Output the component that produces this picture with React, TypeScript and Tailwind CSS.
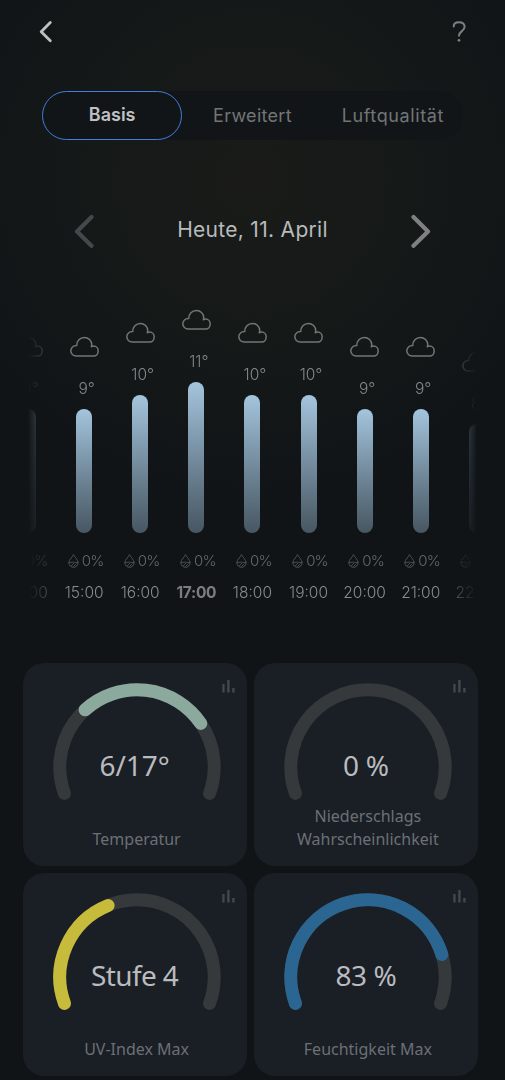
import React from 'react';

interface Hour {
  time: string;
  temp: number;
  barClass: string;
  active?: boolean;
}

interface GaugeCardProps {
  value: string;
  label: React.ReactNode;
  color?: string;
  from?: number;
  to?: number;
  valueClass?: string;
  labelClass?: string;
}

const hours: Hour[] = [
  { time: '14:00', temp: 9, barClass: 'h-[124px]' },
  { time: '15:00', temp: 9, barClass: 'h-[124px]' },
  { time: '16:00', temp: 10, barClass: 'h-[138px]' },
  { time: '17:00', temp: 11, barClass: 'h-[151px]', active: true },
  { time: '18:00', temp: 10, barClass: 'h-[138px]' },
  { time: '19:00', temp: 10, barClass: 'h-[138px]' },
  { time: '20:00', temp: 9, barClass: 'h-[124px]' },
  { time: '21:00', temp: 9, barClass: 'h-[124px]' },
  { time: '22:00', temp: 8, barClass: 'h-[109px]' },
];

const RADIUS = 77.2;
const CENTER = 84;

// 0 is the lower left end of the 220° sweep, 1 the lower right end
const pointAt = (t: number) => {
  const angle = ((200 - 220 * t) * Math.PI) / 180;
  return `${CENTER + RADIUS * Math.cos(angle)} ${CENTER - RADIUS * Math.sin(angle)}`;
};

const arcPath = (from: number, to: number) => {
  const large = (to - from) * 220 > 180 ? 1 : 0;
  return `M${pointAt(from)}A${RADIUS} ${RADIUS} 0 ${large} 1 ${pointAt(to)}`;
};

const CloudIcon: React.FC = () => (
  <svg className="h-[21px] w-[29px]" viewBox="0 0 29 21" fill="none" stroke="#737677" strokeWidth="1.5" strokeLinejoin="round">
    <path d="M6.200 20.100a5.300 5.300 0 0 1-5.400-5.300c0-3 2.600-5.400 5.900-5.200C6.700 4.800 10 1.400 14.300 1.400c4.200 0 7.400 3.200 7.400 7.200 0 .8-.1 1.500-.4 2.200.8-.5 1.600-.7 2.400-.7 2.500 0 4.500 2.200 4.500 5s-2 5-4.500 5z" />
  </svg>
);

const DropIcon: React.FC = () => (
  <svg className="h-[14px] w-[11px]" viewBox="0 0 11 14" fill="none" stroke="#55585a" strokeWidth="0.9" strokeLinecap="round" strokeLinejoin="round">
    <path d="M5.500 1C4 3.400.9 6 .9 8.700a4.600 4.600 0 0 0 9.200 0C10.100 6 7 3.400 5.500 1z" />
    <path d="M1 8.400h3l1.200-.6 1.200.6h3.600M3.200 11.700l2.600-2.500M5.500 12.500l2.800-2.700" strokeWidth="0.8" />
  </svg>
);

const BarsIcon: React.FC = () => (
  <svg className="h-[13px] w-[13px]" viewBox="0 0 13 13" fill="#44484d">
    <rect x="0.300" y="4" width="2.300" height="8.500" />
    <rect x="5.200" y="0" width="2.400" height="12.500" />
    <rect x="10.200" y="8" width="2.400" height="4.500" />
  </svg>
);

const HourColumn: React.FC<Hour> = ({ time, temp, barClass, active }) => (
  <div className="flex w-[56.100px] shrink-0 flex-col items-center">
    <CloudIcon />
    <p className="mt-[22px] mb-[10px] pl-[5px] text-[15.500px] leading-[20px] font-light text-[#85888a]">{temp}°</p>
    <div className={`w-4 rounded-full bg-linear-to-b from-[#a4c5de] to-[#475762] ${barClass}`}></div>
    <div className="mt-[18px] flex h-5 items-center gap-[3px] pl-[3px] text-[15px] font-light tracking-[-0.8px] text-[#66696b]">
      <DropIcon />
      <span>0%</span>
    </div>
    <p className={`mt-[12px] text-[15.500px] leading-[20px] ${active ? 'font-bold tracking-[-0.3px] text-[#7d7d7e]' : 'font-light text-[#888b8c]'}`}>
      {time}
    </p>
  </div>
);

const GaugeCard: React.FC<GaugeCardProps> = ({ value, label, color, from = 0, to = 0, valueClass = '', labelClass = '' }) => (
  <div className="relative flex h-[203px] flex-col items-center rounded-[21px] bg-[#1a1e25] pt-5 font-['Noto_Sans','Open_Sans',sans-serif]">
    <div className="absolute top-[17px] right-[12px]">
      <BarsIcon />
    </div>
    <svg className="ml-1 h-[120px] w-[168px]" viewBox="0 0 168 120" fill="none" strokeWidth="13" strokeLinecap="round">
      <path d={arcPath(0, 1)} stroke="#35393c" />
      {color && <path d={arcPath(from, to)} stroke={color} />}
    </svg>
    <p className={`-mt-[57px] h-[38px] text-[28px] leading-[38px] whitespace-nowrap text-[#b9bbbe] ${valueClass}`}>{value}</p>
    <div className={`mt-[21px] ml-1 flex h-[45px] flex-col justify-end text-center text-[16px] leading-[22.500px] text-[#6c7075] ${labelClass}`}>
      {label}
    </div>
  </div>
);

export default function App() {
  return (
    <div className="h-[1080px] w-[505px] overflow-hidden bg-[#101417] bg-[radial-gradient(circle_at_252px_180px,#1a1b19_0px,#151918_150px,#101417_330px)] font-['Inter',sans-serif]">
      <header className="flex h-[91px] items-start justify-between pt-[20px] pr-[38px] pl-[37px]">
        <svg className="h-6 w-4" viewBox="0 0 16 24" fill="none" stroke="#bfc1c1" strokeWidth="2.800" strokeLinecap="round" strokeLinejoin="round">
          <path d="M13.300 2.500L4.200 11.700l9.100 9" />
        </svg>
        <svg className="h-6 w-4" viewBox="0 0 16 24" fill="none" stroke="#7d8080" strokeWidth="2" strokeLinecap="round">
          <path d="M2.700 6.500C2.700 3.600 5 2.200 8 2.200c3.200 0 5.600 1.500 5.600 4.600 0 4.500-5.600 4.200-5.600 9" />
          <circle cx="8" cy="20.300" r="1.400" fill="#7d8080" stroke="none" />
        </svg>
      </header>

      <nav className="mx-auto grid h-[49px] w-[421px] grid-cols-3 rounded-full bg-[#111518] text-center text-[18px] leading-[49px] text-[#727576]">
        <span className="rounded-full border-[1.500px] border-[#407fdd] leading-[46px] font-semibold text-[#bfc1c2]">Basis</span>
        <span className="tracking-[0.300px]">Erweitert</span>
        <span className="tracking-[0.600px]">Luftqualität</span>
      </nav>

      <div className="mx-[74px] mt-[70px] flex h-10 items-center justify-between">
        <svg className="h-9 w-5" viewBox="0 0 20 36" fill="none" stroke="#45484a" strokeWidth="4.200" strokeLinecap="round" strokeLinejoin="round">
          <path d="M17.500 5L3 19.500l14.500 14.300" />
        </svg>
        <h1 className="text-[21px] tracking-[0.300px] text-[#b9bbbb]">Heute, 11. April</h1>
        <svg className="h-9 w-5" viewBox="0 0 20 36" fill="none" stroke="#7f8181" strokeWidth="4.200" strokeLinecap="round" strokeLinejoin="round">
          <path d="M2.500 5L17 19.500 2.500 33.800" />
        </svg>
      </div>

      <div className="flex h-[353px] items-end overflow-hidden [mask-image:linear-gradient(to_right,transparent_28px,black_70px,black_436px,transparent_477px)]">
        {hours.map((hour) => (
          <HourColumn key={hour.time} {...hour} />
        ))}
      </div>

      <div className="mt-[60px] ml-[22.500px] grid w-[455.500px] grid-cols-2 gap-[7px]">
        <GaugeCard value="6/17°" label="Temperatur" color="#8ca99e" from={0.308} to={0.753} />
        <GaugeCard
          value="0 %"
          valueClass="tracking-[-0.3px]"
          label={
            <>
              <span>Niederschlags</span>
              <span>Wahrscheinlichkeit</span>
            </>
          }
        />
        <GaugeCard value="Stufe 4" valueClass="tracking-[-0.6px]" label="UV-Index Max" color="#c6bb3b" from={0} to={0.4} />
        <GaugeCard value="83 %" valueClass="tracking-[-0.5px]" label="Feuchtigkeit Max" color="#2b6592" from={0} to={0.832} />
      </div>
    </div>
  );
}
